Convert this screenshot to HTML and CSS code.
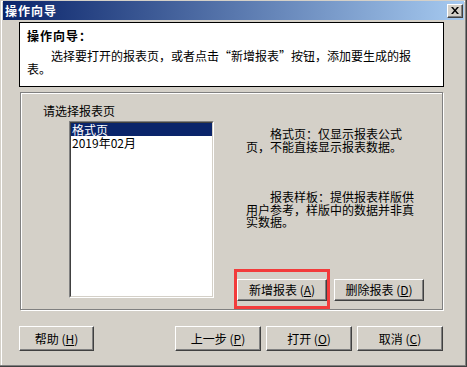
FILE: index.html
```html
<!DOCTYPE html>
<html lang="zh-CN">
<head>
<meta charset="utf-8">
<title>操作向导</title>
<link rel="stylesheet" href="styles.css">
</head>
<body>
<div class="window">
  <div class="titlebar">
    <span class="title">操作向导</span>
    <span class="close"><svg width="8" height="7" viewBox="0 0 8 7"><path d="M0 0h2l2 2.4 2-2.4h2l-3 3.5 3 3.5h-2l-2-2.4-2 2.4h-2l3-3.5z" fill="#000"/></svg></span>
  </div>
  <div class="header">
    <div class="header-title">操作向导：</div>
    <p class="header-text">选择要打开的报表页，或者点击“新增报表”按钮，添加要生成的报表。</p>
  </div>
  <div class="group">
    <div class="col-left">
      <div class="label">请选择报表页</div>
      <div class="listbox">
        <div class="listbox-inner">
          <div class="item selected">格式页</div>
          <div class="item">2019年02月</div>
        </div>
      </div>
    </div>
    <div class="col-right">
      <p class="desc desc1">格式页：仅显示报表公式页，不能直接显示报表数据。</p>
      <p class="desc desc2">报表样板：提供报表样版供用户参考，样版中的数据并非真实数据。</p>
      <div class="group-buttons">
        <button class="btn btn-group btn-new">新增报表 (<u>A</u>)<span class="highlight"></span></button>
        <button class="btn btn-group">删除报表 (<u>D</u>)</button>
      </div>
    </div>
  </div>
  <div class="footer">
    <button class="btn btn-help">帮助 (<u>H</u>)</button>
    <div class="footer-right">
      <button class="btn btn-nav">上一步 (<u>P</u>)</button>
      <button class="btn btn-nav">打开 (<u>O</u>)</button>
      <button class="btn btn-nav">取消 (<u>C</u>)</button>
    </div>
  </div>
</div>
</body>
</html>
```
FILE: styles.css
```css
html, body {
  margin: 0;
  padding: 0;
  background: #d4d0c8;
}

body {
  font-family: "Noto Sans CJK SC", "Liberation Sans", sans-serif;
  font-size: 12px;
  color: #000;
}

.window {
  width: 467px;
  height: 367px;
  box-sizing: border-box;
  padding: 1px 3px 3px 3px;
  background: #d4d0c8;
  box-shadow: inset -1px -1px #404040, inset -2px -2px #808080, inset 1px 1px #d4d0c8, inset 2px 2px #fff;
  display: flex;
  flex-direction: column;
}

.titlebar {
  height: 19px;
  display: flex;
  align-items: center;
  justify-content: space-between;
  padding: 0 1px 0 2px;
  background: linear-gradient(to right, #0a246a, #a6caf0);
}

.title {
  color: #fff;
  font-weight: bold;
  font-size: 12px;
  letter-spacing: 1px;
  line-height: 19px;
}

.close {
  width: 16px;
  height: 14px;
  box-sizing: border-box;
  display: flex;
  align-items: center;
  justify-content: center;
  background: #d4d0c8;
  border: 1px solid;
  border-color: #fff #404040 #404040 #fff;
  box-shadow: inset -1px -1px #808080;
}

.header {
  margin: 2px 0 0 16px;
  width: 425px;
  height: 65px;
  box-sizing: border-box;
  border: 1px solid #000;
  background: #fff;
  padding: 6px 7px 0 7px;
}

.header-title {
  font-weight: bold;
  line-height: 14px;
  letter-spacing: 1px;
}

.header-text {
  margin: 6px 0 0 0;
  width: 390px;
  line-height: 13px;
  text-indent: 24px;
}

.group {
  margin: 5px 0 0 17px;
  width: 423px;
  height: 218px;
  box-sizing: border-box;
  border: 1px solid #808080;
  box-shadow: inset 1px 1px #fff, 1px 1px #fff;
  display: flex;
}

.col-left {
  width: 216px;
  padding: 11px 0 0 22px;
  box-sizing: border-box;
}

.label {
  line-height: 13px;
}

.listbox {
  margin: 4px 0 0 26px;
  width: 145px;
  height: 177px;
  box-sizing: border-box;
  border: 1px solid;
  border-color: #808080 #fff #fff #808080;
}

.listbox-inner {
  height: 100%;
  box-sizing: border-box;
  border: 1px solid;
  border-color: #404040 #d4d0c8 #d4d0c8 #404040;
  background: #fff;
}

.item {
  height: 13px;
  line-height: 13px;
  padding-left: 1px;
  white-space: nowrap;
}

.item.selected {
  background: #0a246a;
  color: #fff;
}

.col-right {
  flex: 1;
  display: flex;
  flex-direction: column;
  padding: 35px 0 8px 0;
}

.desc {
  margin: 0 0 0 9px;
  line-height: 12.5px;
  text-indent: 24px;
}

.desc1 {
  width: 160px;
}

.desc2 {
  width: 169px;
  margin-top: 38px;
}

.group-buttons {
  margin-top: auto;
  display: flex;
  gap: 7px;
}

.btn {
  font-family: "Noto Sans CJK SC", "Liberation Sans", sans-serif;
  font-size: 12px;
  color: #000;
  background: #d4d0c8;
  box-sizing: border-box;
  border: 1px solid;
  border-color: #fff #404040 #404040 #fff;
  box-shadow: inset -1px -1px #808080;
  padding: 0;
  margin: 0;
  line-height: 12px;
  white-space: nowrap;
}

.btn u {
  text-underline-offset: 1px;
}

.btn-group {
  width: 90px;
  height: 22px;
}

.btn-new {
  position: relative;
}

.highlight {
  position: absolute;
  left: -4px;
  top: -11px;
  right: -4px;
  bottom: -9px;
  border: 3px solid #f23b3b;
  pointer-events: none;
}

.footer {
  margin-top: 16px;
  display: flex;
  padding-left: 16px;
}

.btn-help {
  width: 75px;
  height: 25px;
}

.footer-right {
  margin-left: 81px;
  display: flex;
  gap: 5px;
}

.btn-nav {
  width: 86px;
  height: 25px;
}
```
